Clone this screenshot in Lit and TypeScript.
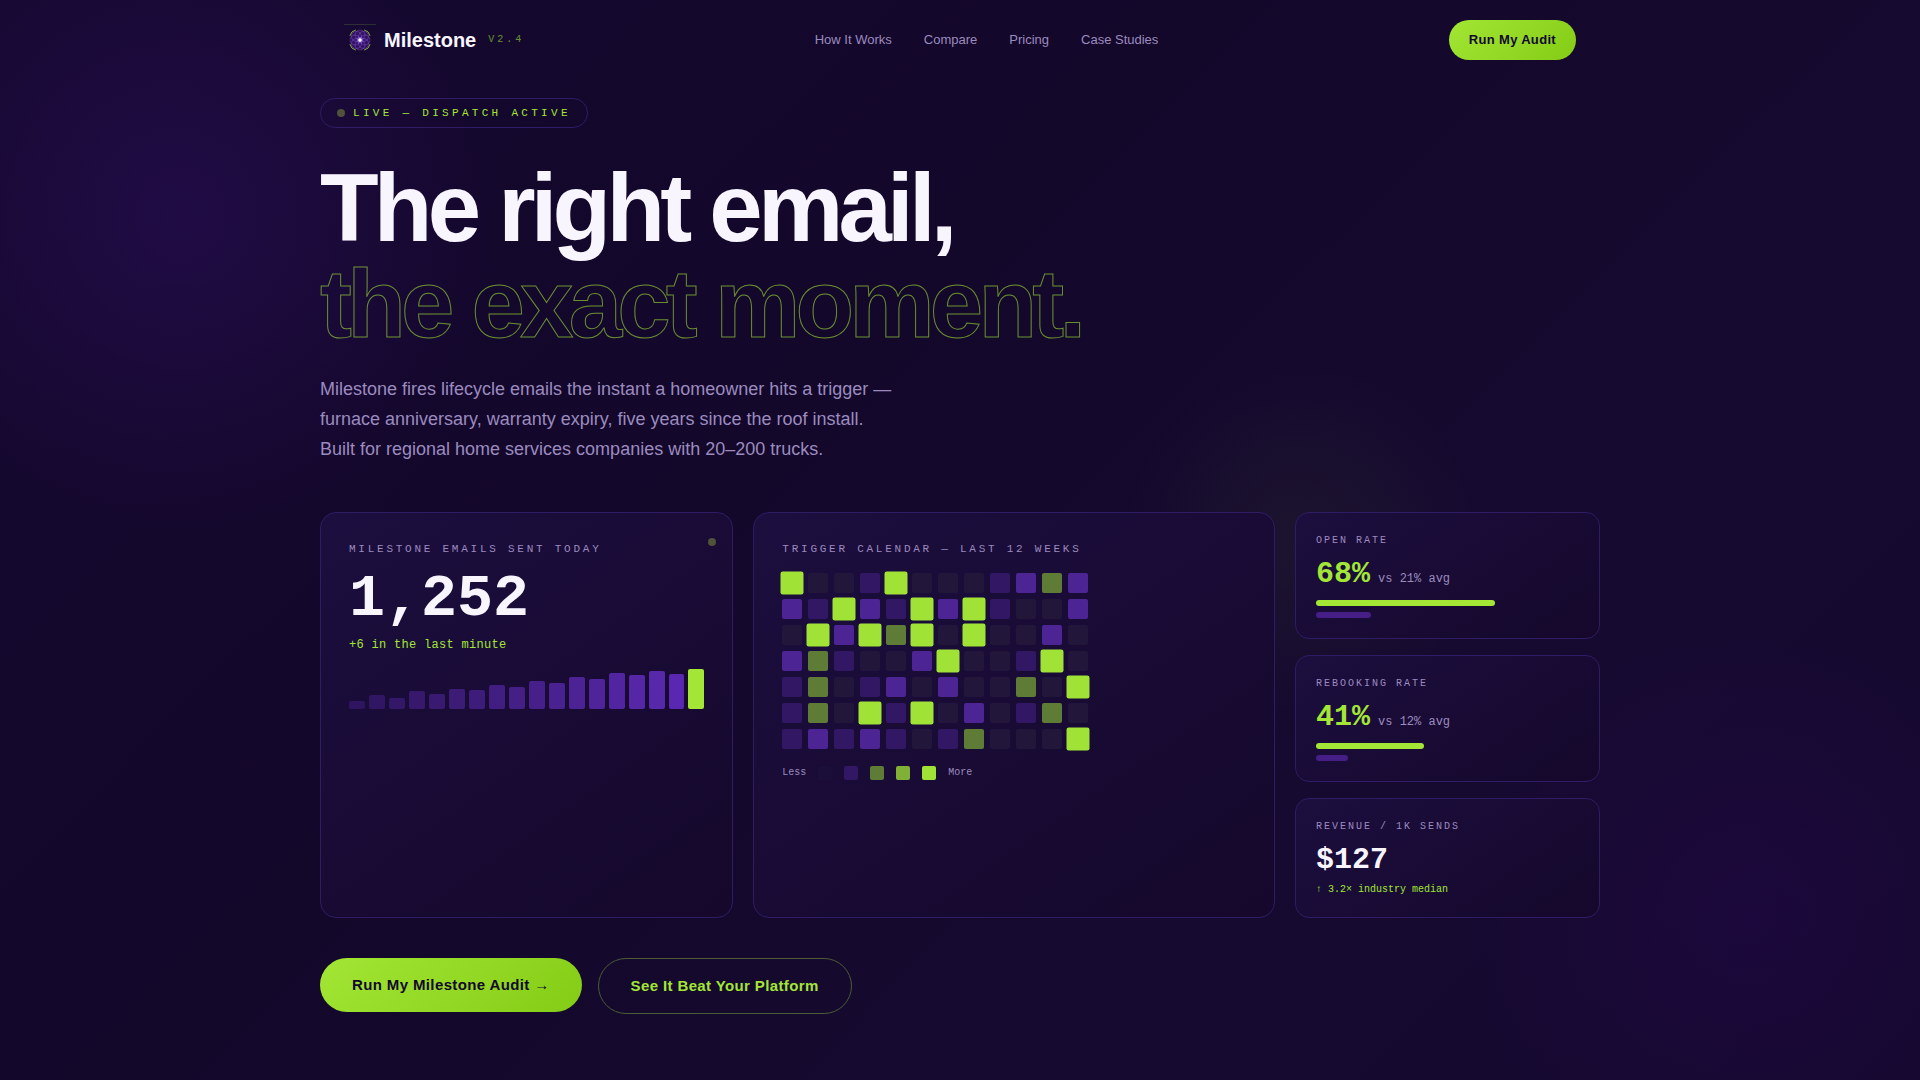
import { LitElement, html, css, svg } from "lit";
import { customElement } from "lit/decorators.js";

const NAV_LINKS = ["How It Works", "Compare", "Pricing", "Case Studies"];

const BAR_HEIGHTS = [20, 35, 28, 45, 38, 50, 48, 60, 55, 70, 65, 80, 75, 90, 85, 95, 88, 100];

// One string per weekday row, one digit per week: activity level 0-4.
const CALENDAR_ROWS = [
  "400140001232",
  "214214241002",
  "042434040020",
  "231002400140",
  "130120200304",
  "130414020130",
  "121210130004",
];

const RATES = [
  { label: "OPEN RATE", value: 68, average: 21 },
  { label: "REBOOKING RATE", value: 41, average: 12 },
];

const PETALS = [0, 45, 90, 135, 180, 225, 270, 315];

@customElement("app-root")
export class AppRoot extends LitElement {
  static styles = css`
    :host {
      --lime: #a3e635;
      --text: #f8f5ff;
      --muted: #9b8bbf;
      --line: #2e1c64;
      --mono: "Liberation Mono", monospace;
      display: block;
      min-height: 100vh;
      box-sizing: border-box;
      color: var(--text);
      font-family: "Liberation Sans", Arial, sans-serif;
      background:
        radial-gradient(circle at 1300px 540px, rgba(163, 230, 53, 0.05), transparent 180px),
        radial-gradient(circle at 180px 215px, rgba(91, 33, 182, 0.17), transparent 320px),
        radial-gradient(circle at 1752px 918px, rgba(76, 5, 150, 0.13), transparent 310px),
        linear-gradient(135deg, #150830 0%, #13072a 40%, #160a30 70%, #14082d 100%);
    }
    * {
      box-sizing: border-box;
    }
    h1, h2, p {
      margin: 0;
    }
    a {
      color: inherit;
      text-decoration: none;
    }
    button {
      font-family: inherit;
      cursor: pointer;
    }
    .container {
      max-width: 1280px;
      margin: 0 auto;
    }
    .nav {
      display: flex;
      align-items: center;
      justify-content: space-between;
      padding: 20px 24px;
    }
    .brand {
      display: flex;
      align-items: center;
      gap: 8px;
    }
    .mark {
      display: block;
      width: 32px;
      height: 32px;
    }
    .brand-name {
      font-size: 20px;
      line-height: 24px;
      font-weight: 700;
    }
    .version {
      margin-left: 4px;
      font: 10px/12px var(--mono);
      letter-spacing: 0.3em;
      color: var(--lime);
      opacity: 0.6;
    }
    .links {
      display: flex;
      gap: 32px;
      font-size: 13px;
      line-height: 16px;
      color: var(--muted);
    }
    .pill {
      border: 0;
      border-radius: 40px;
      color: #14082a;
      background: linear-gradient(135deg, #a3e635, #84cc16);
      font-weight: 700;
      letter-spacing: 0.025em;
    }
    .pill-small {
      padding: 12px 20px;
      font-size: 13px;
      line-height: 16px;
    }
    .hero {
      padding: 18px 0 64px;
    }
    .badge {
      display: inline-flex;
      align-items: center;
      gap: 8px;
      padding: 8px 16px;
      border: 1px solid var(--line);
      border-radius: 20px;
      font: 11px/12px var(--mono);
      letter-spacing: 0.3em;
      color: var(--lime);
      vertical-align: top;
    }
    .dot {
      width: 8px;
      height: 8px;
      border-radius: 50%;
      background: #50523a;
    }
    .title {
      margin: 32px 0 22px;
      font-size: 96px;
      line-height: 96px;
      font-weight: 700;
      letter-spacing: -0.05em;
    }
    .title-line {
      display: block;
    }
    .outline {
      color: transparent;
      -webkit-text-stroke: 1px rgba(163, 230, 53, 0.6);
    }
    .lead {
      max-width: 580px;
      margin-bottom: 48px;
      font-size: 18px;
      line-height: 30px;
      color: var(--muted);
    }
    .grid {
      display: grid;
      grid-template-columns: repeat(12, 1fr);
      gap: 20px;
    }
    .card {
      position: relative;
      padding: 28px;
      border: 1px solid var(--line);
      border-radius: 16px;
      background: linear-gradient(145deg, #1c0e3e, #15082b);
    }
    .sent {
      grid-column: span 4;
    }
    .calendar {
      grid-column: span 5;
    }
    .side {
      grid-column: span 3;
      display: flex;
      flex-direction: column;
      gap: 16px;
    }
    .side .card {
      padding: 20px;
      border-radius: 14px;
    }
    .label {
      font: 11px/16px var(--mono);
      letter-spacing: 0.25em;
      color: var(--muted);
    }
    .label-small {
      margin-bottom: 8px;
      font: 10px/15px var(--mono);
      letter-spacing: 0.2em;
      color: var(--muted);
    }
    .card-dot {
      position: absolute;
      top: 25px;
      right: 16px;
    }
    .count {
      margin-top: 12px;
      font: 700 60px/60px var(--mono);
    }
    .delta {
      margin-top: 8px;
      font: 12px/16px var(--mono);
      letter-spacing: 0.025em;
      color: var(--lime);
    }
    .bars {
      display: flex;
      align-items: flex-end;
      gap: 4px;
      height: 40px;
      margin-top: 16px;
    }
    .bar {
      flex: 1;
      border-radius: 2px;
      background: #5f2bb8;
    }
    .bar:last-child {
      background: var(--lime);
    }
    .cells {
      display: grid;
      grid-template-columns: repeat(12, 20px);
      grid-auto-rows: 20px;
      gap: 6px;
      margin-top: 16px;
    }
    .level0, .level1, .level2, .level3, .level4 {
      border-radius: 2px;
    }
    .level0 {
      background: #22163b;
    }
    .level1 {
      background: #311764;
    }
    .level2 {
      background: #4c2494;
    }
    .level3 {
      background: #5f7c36;
    }
    .level4 {
      background: #a0e336;
    }
    .cells .level4 {
      transform: scale(1.15);
    }
    .legend {
      display: flex;
      align-items: center;
      gap: 12px;
      margin-top: 17px;
      font: 10px/14px var(--mono);
      color: var(--muted);
    }
    .swatch {
      width: 14px;
      height: 14px;
    }
    .swatch.level0 {
      background: #1b0e38;
    }
    .strong {
      border-radius: 2px;
      background: #80b035;
    }
    .rate {
      display: flex;
      align-items: baseline;
      gap: 8px;
      font: 700 30px/36px var(--mono);
    }
    .lime {
      color: var(--lime);
    }
    .versus {
      font: 12px/16px var(--mono);
      color: var(--muted);
    }
    .meter {
      height: 6px;
      margin-top: 6px;
      border-radius: 3px;
      background: #451e86;
    }
    .meter-own {
      margin-top: 8px;
      background: var(--lime);
    }
    .note {
      margin-top: 4px;
      font: 10px/15px var(--mono);
      color: var(--lime);
    }
    .actions {
      display: flex;
      align-items: flex-start;
      gap: 16px;
      margin-top: 40px;
    }
    .action {
      padding: 18px 32px;
      font-size: 15px;
      line-height: 18px;
      letter-spacing: 0.025em;
    }
    .ghost {
      border: 1px solid #4c5c34;
      border-radius: 40px;
      background: transparent;
      color: var(--lime);
      font-weight: 700;
    }
  `;

  private renderMark() {
    return svg`
      <svg class="mark" viewBox="0 0 32 32" aria-hidden="true">
        <defs>
          <radialGradient id="core">
            <stop offset="0" stop-color="#fff" />
            <stop offset="0.35" stop-color="#d9c8f5" stop-opacity="0.7" />
            <stop offset="1" stop-color="#7c3aed" stop-opacity="0" />
          </radialGradient>
        </defs>
        <path d="M0 0.5H32" stroke="#a3e635" stroke-opacity="0.18" />
        <circle cx="16" cy="16" r="9.5" fill="#5b21b6" fill-opacity="0.25" />
        ${PETALS.map(
          (angle) => svg`<circle cx="16" cy="11" r="5" fill="#7c3aed" fill-opacity="0.06"
            stroke="#a56be0" stroke-opacity="0.5" stroke-width="0.7" transform="rotate(${angle} 16 16)" />`
        )}
        <g fill="none" stroke="#b5e05a" stroke-opacity="0.75" stroke-width="1" stroke-linecap="round">
          <path d="M6 11.5 Q7 7 11.5 6" />
          <path d="M20.5 6 Q25 7 26 11.5" />
          <path d="M26 20.5 Q25 25 20.5 26" />
          <path d="M11.5 26 Q7 25 6 20.5" />
        </g>
        <circle cx="16" cy="16" r="4" fill="url(#core)" />
        <circle cx="16" cy="16" r="1.5" fill="#fff" />
      </svg>
    `;
  }

  render() {
    return html`
      <header class="container nav">
        <a class="brand" href="#">
          ${this.renderMark()}
          <span class="brand-name">Milestone</span>
          <span class="version">V2.4</span>
        </a>
        <nav class="links">${NAV_LINKS.map((link) => html`<a href="#">${link}</a>`)}</nav>
        <button class="pill pill-small">Run My Audit</button>
      </header>
      <main class="container hero">
        <div class="badge"><span class="dot"></span>LIVE — DISPATCH ACTIVE</div>
        <h1 class="title">
          <span class="title-line">The right email,</span>
          <span class="title-line outline">the exact moment.</span>
        </h1>
        <p class="lead">
          Milestone fires lifecycle emails the instant a homeowner hits a trigger — furnace anniversary,
          warranty expiry, five years since the roof install. Built for regional home services companies with
          20–200 trucks.
        </p>
        <div class="grid">
          <section class="card sent">
            <span class="dot card-dot"></span>
            <h2 class="label">MILESTONE EMAILS SENT TODAY</h2>
            <p class="count">1,252</p>
            <p class="delta">+6 in the last minute</p>
            <div class="bars">
              ${BAR_HEIGHTS.map((height, i) => {
                const opacity = i === BAR_HEIGHTS.length - 1 ? 1 : 0.3 + i * 0.04;
                return html`<div class="bar" style="height:${height}%;opacity:${opacity}"></div>`;
              })}
            </div>
          </section>
          <section class="card calendar">
            <h2 class="label">TRIGGER CALENDAR — LAST 12 WEEKS</h2>
            <div class="cells">
              ${CALENDAR_ROWS.map((row) => [...row].map((level) => html`<div class="level${level}"></div>`))}
            </div>
            <div class="legend">
              <span>Less</span>
              <span class="swatch level0"></span>
              <span class="swatch level1"></span>
              <span class="swatch level3"></span>
              <span class="swatch strong"></span>
              <span class="swatch level4"></span>
              <span>More</span>
            </div>
          </section>
          <div class="side">
            ${RATES.map(
              (rate) => html`<section class="card">
                <h2 class="label-small">${rate.label}</h2>
                <p class="rate">
                  <span class="lime">${rate.value}%</span>
                  <span class="versus">vs ${rate.average}% avg</span>
                </p>
                <div class="meter meter-own" style="width:${rate.value}%"></div>
                <div class="meter" style="width:${rate.average}%"></div>
              </section>`
            )}
            <section class="card">
              <h2 class="label-small">REVENUE / 1K SENDS</h2>
              <p class="rate">$127</p>
              <p class="note">↑ 3.2× industry median</p>
            </section>
          </div>
        </div>
        <div class="actions">
          <button class="pill action">Run My Milestone Audit →</button>
          <button class="ghost action">See It Beat Your Platform</button>
        </div>
      </main>
    `;
  }
}
